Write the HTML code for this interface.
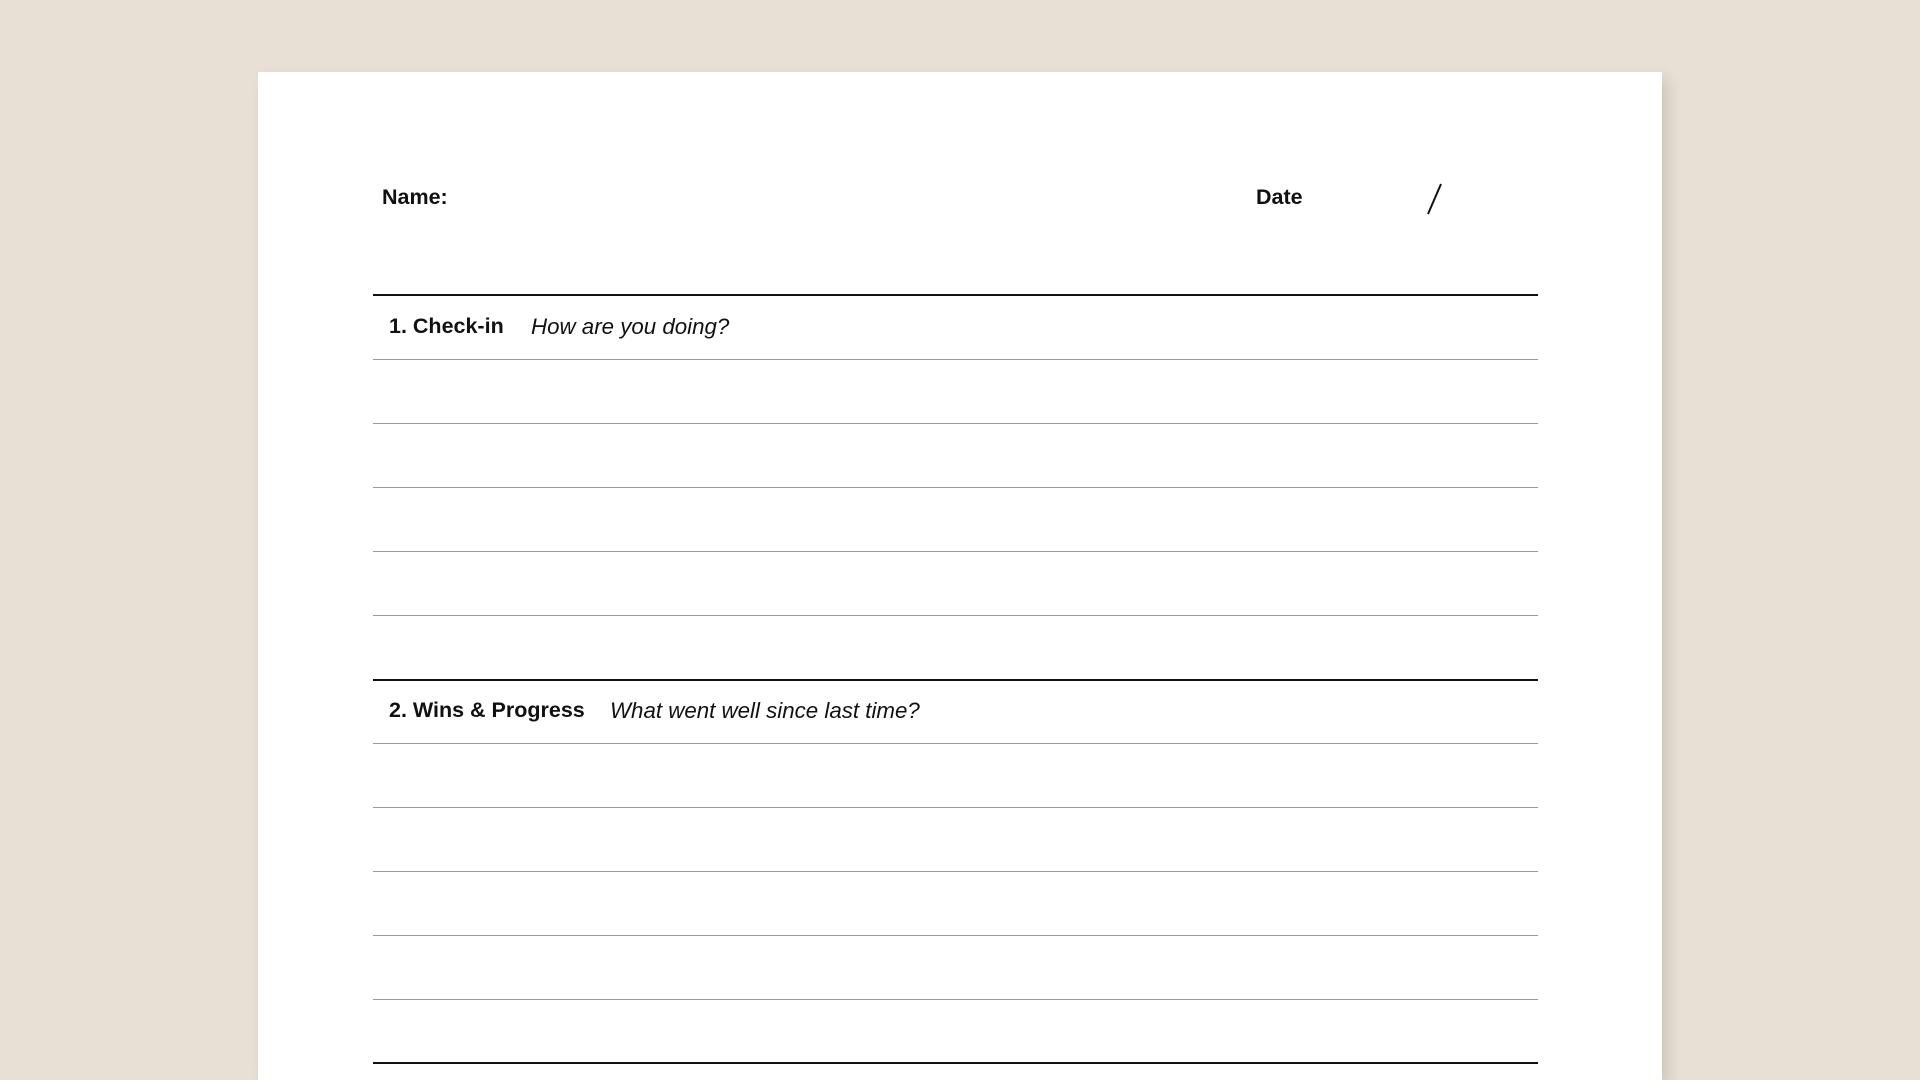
<!DOCTYPE html>
<html style="overflow:hidden;width:1920px;height:1080px"><head><style>
html,body{margin:0;width:1920px;height:1080px;overflow:hidden;}
body{background:#e8e0d5;position:relative;font-family:"Liberation Sans",sans-serif;}
.paper{position:absolute;left:258px;top:72px;width:1404px;height:1008px;background:#fff;box-shadow:6px 6px 14px rgba(0,0,0,0.12);}
.t{position:absolute;font-size:21.5px;color:#111;white-space:nowrap;line-height:1;}
.b{font-weight:bold;}
.i{font-style:italic;font-size:22.3px;}
.l{position:absolute;left:373px;width:1165px;height:1px;background:#9a9a9a;}
.k{position:absolute;left:373px;width:1165px;height:2px;background:#111;}
</style></head><body>
<div class="paper"></div>
<div class="t b" style="left:382px;top:187px">Name:</div>
<div class="t b" style="left:1256px;top:187px">Date</div>
<svg style="position:absolute;left:1420px;top:180px" width="30" height="40"><line x1="8" y1="34" x2="21" y2="4" stroke="#111" stroke-width="2"/></svg>
<div class="k" style="top:294px"></div>
<div class="t b" style="left:389px;top:316px">1. Check-in</div>
<div class="t i" style="left:531px;top:316px">How are you doing?</div>
<div class="l" style="top:359px"></div>
<div class="l" style="top:423px"></div>
<div class="l" style="top:487px"></div>
<div class="l" style="top:551px"></div>
<div class="l" style="top:615px"></div>
<div class="k" style="top:679px"></div>
<div class="t b" style="left:389px;top:700px">2. Wins &amp; Progress</div>
<div class="t i" style="left:610px;top:700px">What went well since last time?</div>
<div class="l" style="top:743px"></div>
<div class="l" style="top:807px"></div>
<div class="l" style="top:871px"></div>
<div class="l" style="top:935px"></div>
<div class="l" style="top:999px"></div>
<div class="k" style="top:1062px"></div>
</body></html>
